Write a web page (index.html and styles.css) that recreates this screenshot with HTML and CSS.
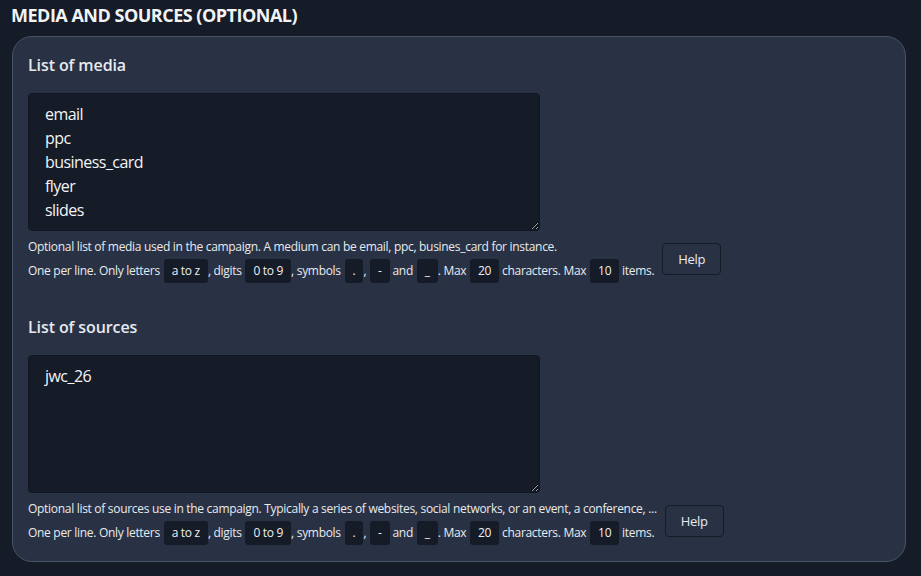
FILE: index.html
```html
<!DOCTYPE html>
<html lang="en">
<head>
<meta charset="utf-8">
<title>Media and sources</title>
<link rel="stylesheet" href="styles.css">
</head>
<body>
<h2 class="section-title">MEDIA AND SOURCES (OPTIONAL)</h2>
<div class="card">
  <div class="field">
    <label class="field-label" for="media">List of media</label>
    <textarea id="media" class="field-input">email
ppc
business_card
flyer
slides</textarea>
    <div class="field-help">
      <div class="help-text">
        <p class="help-line">Optional list of media used in the campaign. A medium can be email, ppc, busines_card for instance.</p>
        <p class="help-line">One per line. Only letters <code class="chip">a to z</code>, digits <code class="chip">0 to 9</code>, symbols <code class="chip">.</code>, <code class="chip">-</code> and <code class="chip">_</code>. Max <code class="chip">20</code> characters. Max <code class="chip">10</code> items.</p>
      </div>
      <button class="help-btn" type="button">Help</button>
    </div>
  </div>
  <div class="field">
    <label class="field-label" for="sources">List of sources</label>
    <textarea id="sources" class="field-input">jwc_26</textarea>
    <div class="field-help">
      <div class="help-text">
        <p class="help-line">Optional list of sources use in the campaign. Typically a series of websites, social networks, or an event, a conference, ...</p>
        <p class="help-line">One per line. Only letters <code class="chip">a to z</code>, digits <code class="chip">0 to 9</code>, symbols <code class="chip">.</code>, <code class="chip">-</code> and <code class="chip">_</code>. Max <code class="chip">20</code> characters. Max <code class="chip">10</code> items.</p>
      </div>
      <button class="help-btn" type="button">Help</button>
    </div>
  </div>
</div>
</body>
</html>
```
FILE: styles.css
```css
html, body {
  margin: 0;
  padding: 0;
  background: #151b27;
}
body {
  padding: 3px 15px 0 12px;
  font-family: "Open Sans", "Noto Sans", sans-serif;
  color: #eceef1;
}
.section-title {
  margin: 0 0 9px -1px;
  font-size: 18px;
  line-height: 24px;
  font-weight: 700;
  letter-spacing: -0.5px;
  color: #f1f3f5;
}
.card {
  background: #283244;
  border: 1px solid #485366;
  border-radius: 20px;
  padding: 16px 15px;
  display: flex;
  flex-direction: column;
  gap: 32px;
}
.field {
  display: flex;
  flex-direction: column;
  align-items: flex-start;
}
.field-label {
  font-size: 16px;
  line-height: 24px;
  font-weight: 600;
  letter-spacing: -0.1px;
  color: #e6e9ee;
  margin-bottom: 16px;
}
.field-input {
  box-sizing: border-box;
  width: 512px;
  height: 138px;
  margin: 0;
  padding: 8px 16px;
  background: #151b27;
  border: 1px solid #111722;
  border-radius: 4px;
  color: #f2f4f7;
  font-family: inherit;
  font-size: 16px;
  line-height: 24px;
  letter-spacing: -0.55px;
  resize: both;
  color-scheme: dark;
  outline: none;
}
.field-help {
  margin-top: 4px;
  display: flex;
  align-items: center;
  gap: 8px;
}
.help-line {
  margin: 0;
  font-size: 12px;
  line-height: 24px;
  letter-spacing: -0.3px;
  color: #e8eaee;
}
.chip {
  display: inline-block;
  margin-left: 1px;
  padding: 0 8px;
  font-family: inherit;
  font-size: 12px;
  line-height: 24px;
  background: #151b27;
  border-radius: 3px;
  color: #eef0f3;
}
.help-btn {
  height: 32px;
  padding: 0 15px;
  background: #283244;
  border: 1px solid #151b27;
  border-radius: 4px;
  color: #e8eaee;
  font-family: inherit;
  font-size: 13px;
  letter-spacing: -0.3px;
}
```
